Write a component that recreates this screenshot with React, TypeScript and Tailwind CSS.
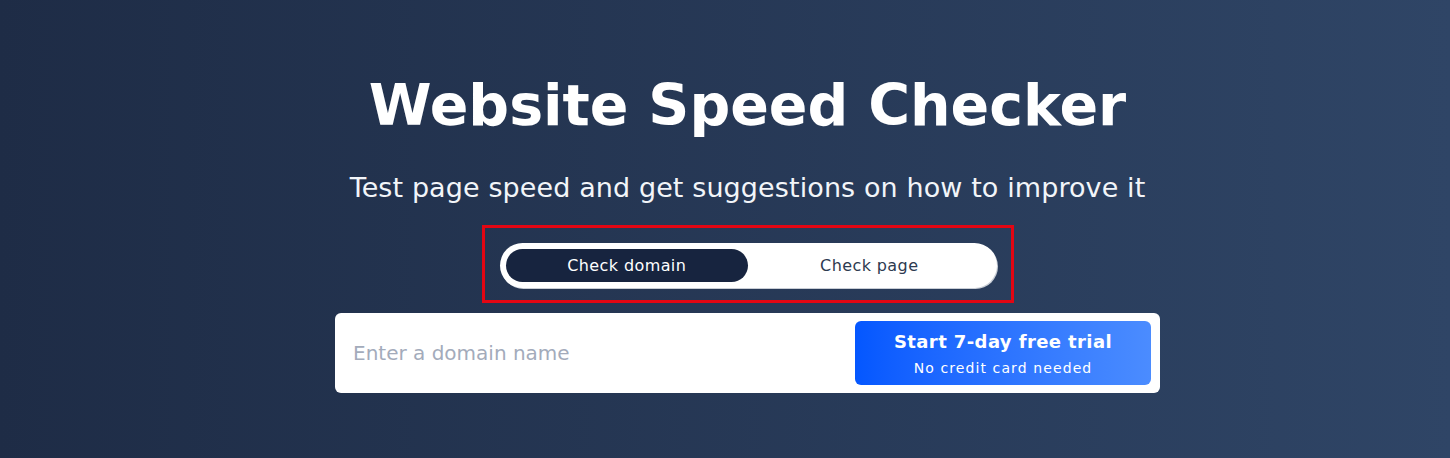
import React, { useState } from 'react';

export default function App() {
  const [mode, setMode] = useState<'domain' | 'page'>('domain');

  return (
    <div
      className="flex flex-col items-center w-full h-[458px] pl-[45px] bg-gradient-to-r from-[#1e2c46] to-[#2f4566] text-white"
      style={{ fontFamily: '"DejaVu Sans", "Open Sans", sans-serif' }}
    >
      <h1 className="mt-[69px] text-[57px] leading-[72px] font-bold">
        Website Speed Checker
      </h1>
      <p className="mt-[29px] text-[27px] leading-[36px] font-normal text-[#f2f5f9] tracking-[0.1px]">
        Test page speed and get suggestions on how to improve it
      </p>

      {/* highlighted toggle */}
      <div className="mt-[19px] w-[532px] h-[78px] border-[3px] border-[#e30613] pl-[15px] pt-[15px]">
        <div className="flex w-[497px] h-[45px] p-[6px] bg-white rounded-full shadow-[1px_1px_0_#c9ced6]">
          <button
            onClick={() => setMode('domain')}
            className={`flex-1 rounded-full text-[16px] tracking-[0.4px] ${mode === 'domain' ? 'bg-[#17243f] text-white' : 'text-[#2d3a50]'}`}
          >
            Check domain
          </button>
          <button
            onClick={() => setMode('page')}
            className={`flex-1 rounded-full text-[16px] tracking-[0.4px] ${mode === 'page' ? 'bg-[#17243f] text-white' : 'text-[#2d3a50]'}`}
          >
            Check page
          </button>
        </div>
      </div>

      <div className="mt-[10px] flex items-center w-[825px] h-[80px] bg-white rounded-[6px] pl-[18px] pr-[9px]">
        <input
          className="flex-1 text-[20px] text-[#2d3a50] placeholder-[#a3abbb] outline-none bg-transparent"
          placeholder={mode === 'domain' ? 'Enter a domain name' : 'Enter a page URL'}
        />
        <button className="flex flex-col items-center justify-center w-[296px] h-[64px] rounded-[6px] bg-gradient-to-r from-[#0457ff] to-[#4b8cff] text-white">
          <span className="text-[18px] leading-[24px] font-bold tracking-[0.4px]">Start 7-day free trial</span>
          <span className="mt-[5px] text-[14px] leading-[18px] tracking-[1.1px]">No credit card needed</span>
        </button>
      </div>
    </div>
  );
}
